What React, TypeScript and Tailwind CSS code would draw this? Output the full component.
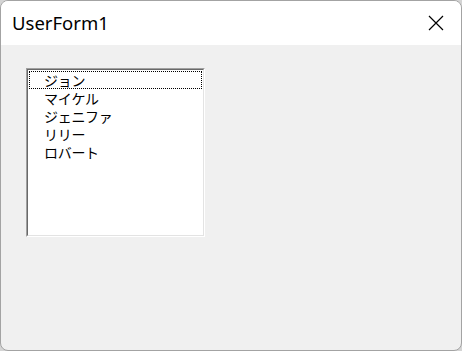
export default function App() {
  const items = ["ジョン", "マイケル", "ジェニファ", "リリー", "ロバート"]

  return (
    <div className="w-[462px] h-[351px] bg-[#d4d4d4]">
      <div className="w-[462px] h-[351px] rounded-[8px] border border-[#a3a3a3] bg-[#f0f0f0] overflow-hidden flex flex-col">
        {/* title bar */}
        <div className="h-[44px] bg-white flex items-center justify-between pl-[11px] pr-[17px]">
          <span className="text-[18.5px] text-black font-['Noto_Sans',sans-serif] leading-none">UserForm1</span>
          <svg width="16" height="16" viewBox="0 0 16 16" className="text-black">
            <path d="M1 1 L15 15 M15 1 L1 15" stroke="currentColor" strokeWidth="1.2" fill="none" />
          </svg>
        </div>

        {/* body */}
        <div className="flex-1 pt-[23px] pl-[25px]">
          <div className="w-[179px] h-[169px] border-t border-l border-[#a0a0a0] border-b border-r border-b-white border-r-white">
            <div className="w-full h-full border-t border-l border-[#696969] border-b border-r border-b-[#e3e3e3] border-r-[#e3e3e3] bg-white pt-[1px] pl-[1px] pr-[1px]">
              {items.map((name, i) => (
                <div
                  key={name}
                  className={
                    "h-[18px] pl-[15px] text-[14px] leading-[18px] tracking-[-0.3px] text-black font-['Noto_Sans_CJK_JP',sans-serif] " +
                    (i === 0 ? "outline outline-1 outline-dotted outline-black -outline-offset-1" : "")
                  }
                >
                  {name}
                </div>
              ))}
            </div>
          </div>
        </div>
      </div>
    </div>
  )
}
